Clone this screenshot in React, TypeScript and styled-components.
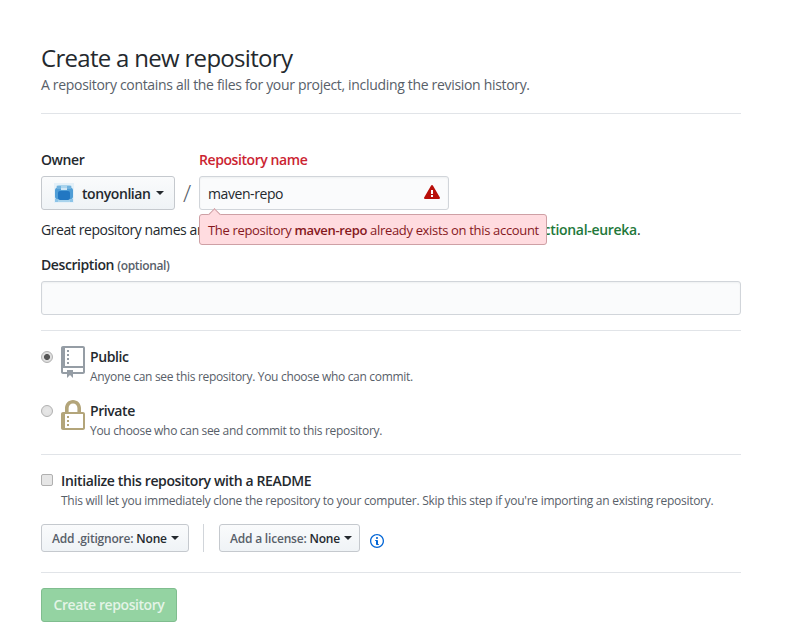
import React from "react";
import styled, { createGlobalStyle } from "styled-components";

const Global = createGlobalStyle`
  html, body { margin: 0; padding: 0; background: #fff; }
  body { font-family: "Open Sans", "Liberation Sans", sans-serif; font-size: 14px; color: #24292e; letter-spacing: -0.42px; }
  * { box-sizing: border-box; }
`;

const Page = styled.main`
  width: 700px;
  margin-left: 41px;
  padding-top: 42px;
`;
const Title = styled.h1`
  margin: 0;
  font-size: 24px;
  font-weight: 400;
  line-height: 32px;
  letter-spacing: -0.7px;
  color: #24292e;
`;
const Subtitle = styled.p`
  margin: 0 0 18px;
  height: 21px;
  line-height: 21px;
  letter-spacing: -0.32px;
  color: #586069;
`;
const Rule = styled.hr<{ $after: number }>`
  border: 0;
  border-top: 1px solid #e1e4e8;
  margin: 0 0 ${(p) => p.$after}px;
`;
const OwnerRow = styled.div`
  display: flex;
  align-items: flex-end;
  margin-top: 37px;
`;
const Field = styled.div`
  display: flex;
  flex-direction: column;
`;
const Label = styled.label<{ $error?: boolean }>`
  height: 25px;
  line-height: 17px;
  font-weight: 600;
  color: ${(p) => (p.$error ? "#cb2431" : "#24292e")};
`;
const Slash = styled.span`
  width: 24px;
  height: 34px;
  line-height: 33px;
  text-align: center;
  font-size: 24px;
  font-weight: 300;
  color: #586069;
`;
const OwnerButton = styled.button`
  width: 134px;
  height: 34px;
  display: flex;
  align-items: center;
  padding: 0 0 0 12px;
  font: inherit;
  letter-spacing: inherit;
  font-weight: 600;
  color: #24292e;
  background: linear-gradient(#fafbfc, #eff3f6);
  border: 1px solid #c5c9ce;
  border-radius: 3px;
`;
const Caret = styled.i<{ $gap: number }>`
  display: inline-block;
  width: 0;
  height: 0;
  margin-left: ${(p) => p.$gap}px;
  border-top: 4px solid #24292e;
  border-left: 4px solid transparent;
  border-right: 4px solid transparent;
`;
const NameBox = styled.div`
  position: relative;
  width: 250px;
  height: 34px;
`;
const NameInput = styled.input`
  width: 100%;
  height: 100%;
  padding: 0 36px 0 8px;
  font: inherit;
  letter-spacing: inherit;
  color: #24292e;
  background: #fafbfc;
  border: 1px solid #d1d5da;
  border-radius: 3px;
  outline: 0;
  box-shadow: inset 0 1px 2px rgba(27, 31, 35, 0.05);
`;
const AlertMark = styled.svg`
  position: absolute;
  right: 9px;
  top: 8px;
  width: 16px;
  height: 16px;
  fill: #b80f0a;
`;
const Tooltip = styled.div`
  position: absolute;
  left: 0;
  top: 38px;
  width: 348px;
  height: 31px;
  padding-left: 8px;
  font-size: 13px;
  letter-spacing: -0.33px;
  line-height: 31px;
  white-space: nowrap;
  color: #86181d;
  background: #ffdce0;
  border: 1px solid #cea0a5;
  border-radius: 3px;
  z-index: 2;
  strong { font-weight: 600; }
  &::before {
    content: "";
    position: absolute;
    left: 10px;
    top: -5px;
    width: 8px;
    height: 8px;
    background: #ffdce0;
    border-left: 1px solid #cea0a5;
    border-top: 1px solid #cea0a5;
    transform: rotate(45deg);
  }
`;
const Note = styled.p`
  margin: 10px 0 0;
  height: 20px;
  line-height: 20px;
  white-space: nowrap;
  color: #24292e;
  strong { font-weight: 600; letter-spacing: -0.3px; color: #22783a; }
`;
const DescLabel = styled.label`
  display: block;
  margin-top: 15px;
  height: 26px;
  line-height: 20px;
  font-weight: 600;
  small { font-size: 12px; letter-spacing: -0.34px; color: #586069; }
`;
const DescInput = styled.input`
  display: block;
  width: 700px;
  height: 34px;
  background: #fafbfc;
  border: 1px solid #d1d5da;
  border-radius: 3px;
  box-shadow: inset 0 1px 2px rgba(27, 31, 35, 0.05);
  margin-bottom: 15px;
`;
const VisibilityRow = styled.div<{ $after: number }>`
  display: flex;
  align-items: flex-start;
  margin-bottom: ${(p) => p.$after}px;
`;
const Radio = styled.input.attrs({ type: "radio" })`
  appearance: none;
  flex: none;
  width: 12px;
  height: 12px;
  margin: 5px 8px 0 0;
  border-radius: 50%;
  border: 1px solid #b0b0b0;
  background: radial-gradient(circle, #e8e8e8, #dedede);
  &:checked {
    background: radial-gradient(circle, #555 0 2.6px, #dedede 3.4px);
  }
`;
const RepoMark = styled.svg<{ $tint: string }>`
  flex: none;
  width: 24px;
  height: 32px;
  fill: ${(p) => p.$tint};
  margin-right: 5px;
`;
const VisibilityText = styled.div`
  padding-top: 2px;
`;
const OptionTitle = styled.div`
  height: 21px;
  line-height: 18px;
  font-weight: 600;
`;
const OptionHint = styled.div`
  line-height: 16px;
  font-size: 12px;
  letter-spacing: -0.31px;
  color: #586069;
  white-space: nowrap;
`;
const CheckRow = styled.label`
  display: flex;
  align-items: center;
  height: 20px;
  font-weight: 600;
  letter-spacing: -0.37px;
  margin-top: 15px;
`;
const Check = styled.input.attrs({ type: "checkbox" })`
  appearance: none;
  width: 12px;
  height: 12px;
  margin: 0 8px 0 0;
  border: 1px solid #b0b0b0;
  border-radius: 2px;
  background: #e6e6e6;
`;
const CheckHint = styled(OptionHint)`
  margin: 2px 0 0 20px;
  height: 18px;
  line-height: 18px;
  letter-spacing: -0.27px;
`;
const Selects = styled.div`
  display: flex;
  align-items: center;
  margin-top: 14px;
  margin-bottom: 20px;
`;
const SelectButton = styled.button<{ $width: number }>`
  width: ${(p) => p.$width}px;
  height: 28px;
  padding: 0 0 0 10px;
  display: flex;
  align-items: center;
  font: inherit;
  font-size: 12px;
  letter-spacing: -0.2px;
  font-weight: 600;
  white-space: nowrap;
  color: #24292e;
  background: linear-gradient(#fafbfc, #eff3f6);
  border: 1px solid #c5c9ce;
  border-radius: 3px;
  span { color: #586069; margin-right: 3px; }
`;
const Divider = styled.span`
  width: 1px;
  height: 28px;
  background: #d1d5da;
  margin: 0 15px 0 14px;
`;
const InfoMark = styled.svg`
  width: 14px;
  height: 16px;
  margin: 5px 0 0 10px;
  fill: #0366d6;
`;
const Submit = styled.button`
  display: block;
  width: 136px;
  height: 34px;
  margin-top: 15px;
  padding: 0 0 2px;
  font: inherit;
  letter-spacing: inherit;
  font-weight: 600;
  color: rgba(255, 255, 255, 0.75);
  background: #94d3a2;
  border: 1px solid #80bd8f;
  border-radius: 3px;
`;
const Avatar = styled.svg`
  width: 20px;
  height: 20px;
  flex: none;
  margin-right: 8px;
`;

export default function App() {
  return (
    <Page>
      <Global />
      <Title>Create a new repository</Title>
      <Subtitle>A repository contains all the files for your project, including the revision history.</Subtitle>
      <Rule $after={0} />
      <OwnerRow>
        <Field>
          <Label>Owner</Label>
          <OwnerButton>
            <Avatar viewBox="0 0 20 20">
              <rect x="0" y="0" width="20" height="20" fill="#e4f0f8" />
              <rect x="2" y="2" width="16" height="17" rx="3" fill="#a9d3ec" />
              <rect x="1" y="5" width="18" height="11" rx="2" fill="#4f9dd6" />
              <rect x="4" y="8" width="12" height="9" rx="2" fill="#2277c2" />
              <rect x="3" y="3" width="4" height="3" fill="#6fb1de" />
              <rect x="13" y="3" width="4" height="3" fill="#6fb1de" />
              <rect x="7" y="5" width="6" height="2" fill="#cfe6f5" />
              <rect x="1" y="16" width="3" height="3" fill="#8cc4e8" />
              <rect x="16" y="16" width="3" height="3" fill="#8cc4e8" />
            </Avatar>
            tonyonlian
            <Caret $gap={5} />
          </OwnerButton>
        </Field>
        <Slash>/</Slash>
        <Field>
          <Label $error>Repository name</Label>
          <NameBox>
            <NameInput defaultValue="maven-repo" />
            <AlertMark viewBox="0 0 16 16">
              <path d="M8.893 1.5c-.183-.31-.52-.5-.887-.5s-.703.19-.886.5L.138 13.499a.98.98 0 0 0 0 1.001c.193.31.53.501.886.501h13.964c.367 0 .704-.19.877-.5a1.03 1.03 0 0 0 .01-1.002L8.893 1.5zm.133 11.497H6.987v-2.003h2.039v2.003zm0-3.004H6.987V5.987h2.039v4.006z" />
            </AlertMark>
            <Tooltip>
              The repository <strong>maven-repo</strong> already exists on this account
            </Tooltip>
          </NameBox>
        </Field>
      </OwnerRow>
      <Note>
        Great repository names are short and memorable. Need inspiration? How about <strong>fictional-eureka</strong>.
      </Note>
      <DescLabel>
        Description <small>(optional)</small>
      </DescLabel>
      <DescInput />
      <Rule $after={15} />
      <VisibilityRow $after={15}>
        <Radio name="v" defaultChecked />
        <RepoMark $tint="#959da5" viewBox="0 0 12 16">
          <path d="M4 9H3V8h1v1zm0-3H3v1h1V6zm0-2H3v1h1V4zm0-2H3v1h1V2zm8-1v12c0 .55-.45 1-1 1H6v2l-1.5-1.5L3 16v-2H1c-.55 0-1-.45-1-1V1c0-.55.45-1 1-1h10c.55 0 1 .45 1 1zm-1 10H1v2h2v-1h3v1h5v-2zm0-10H2v9h9V1z" />
        </RepoMark>
        <VisibilityText>
          <OptionTitle>Public</OptionTitle>
          <OptionHint>Anyone can see this repository. You choose who can commit.</OptionHint>
        </VisibilityText>
      </VisibilityRow>
      <VisibilityRow $after={15}>
        <Radio name="v" />
        <RepoMark $tint="#b3a57a" viewBox="0 0 12 16">
          <path d="M4 13H3v-1h1v1zm8-6v7c0 .55-.45 1-1 1H1c-.55 0-1-.45-1-1V7c0-.55.45-1 1-1h1V4c0-2.2 1.8-4 4-4s4 1.8 4 4v2h1c.55 0 1 .45 1 1zM3.8 6h4.41V4c0-1.22-.98-2.2-2.2-2.2-1.22 0-2.2.98-2.2 2.2v2H3.8zM11 7H2v7h9V7zM4 8H3v1h1V8zm0 2H3v1h1v-1z" />
        </RepoMark>
        <VisibilityText>
          <OptionTitle>Private</OptionTitle>
          <OptionHint>You choose who can see and commit to this repository.</OptionHint>
        </VisibilityText>
      </VisibilityRow>
      <Rule $after={0} />
      <CheckRow>
        <Check />
        Initialize this repository with a README
      </CheckRow>
      <CheckHint>This will let you immediately clone the repository to your computer. Skip this step if you're importing an existing repository.</CheckHint>
      <Selects>
        <SelectButton $width={148}>
          <span>Add .gitignore:</span> None
          <Caret $gap={4} />
        </SelectButton>
        <Divider />
        <SelectButton $width={141}>
          <span>Add a license:</span> None
          <Caret $gap={4} />
        </SelectButton>
        <InfoMark viewBox="0 0 14 16">
          <path d="M6.3 5.69a.942.942 0 0 1-.28-.7c0-.28.09-.52.28-.7.19-.18.42-.28.7-.28.28 0 .52.09.7.28.18.19.28.42.28.7 0 .28-.09.52-.28.7a1 1 0 0 1-.7.3c-.28 0-.52-.11-.7-.3zM8 7.99c-.02-.25-.11-.48-.31-.69-.2-.19-.42-.3-.69-.31H6c-.27.02-.48.13-.69.31-.2.2-.3.44-.31.69h1v3c.02.27.11.5.31.69.2.2.42.31.69.31h1c.27 0 .48-.11.69-.31.2-.19.3-.42.31-.69H8V7.98v.01zM7 2.3c-3.14 0-5.7 2.54-5.7 5.68 0 3.14 2.56 5.7 5.7 5.7s5.7-2.55 5.7-5.7c0-3.15-2.56-5.69-5.7-5.69v.01zM7 .98c3.86 0 7 3.14 7 7s-3.14 7-7 7-7-3.12-7-7 3.14-7 7-7z" />
        </InfoMark>
      </Selects>
      <Rule $after={0} />
      <Submit disabled>Create repository</Submit>
    </Page>
  );
}
